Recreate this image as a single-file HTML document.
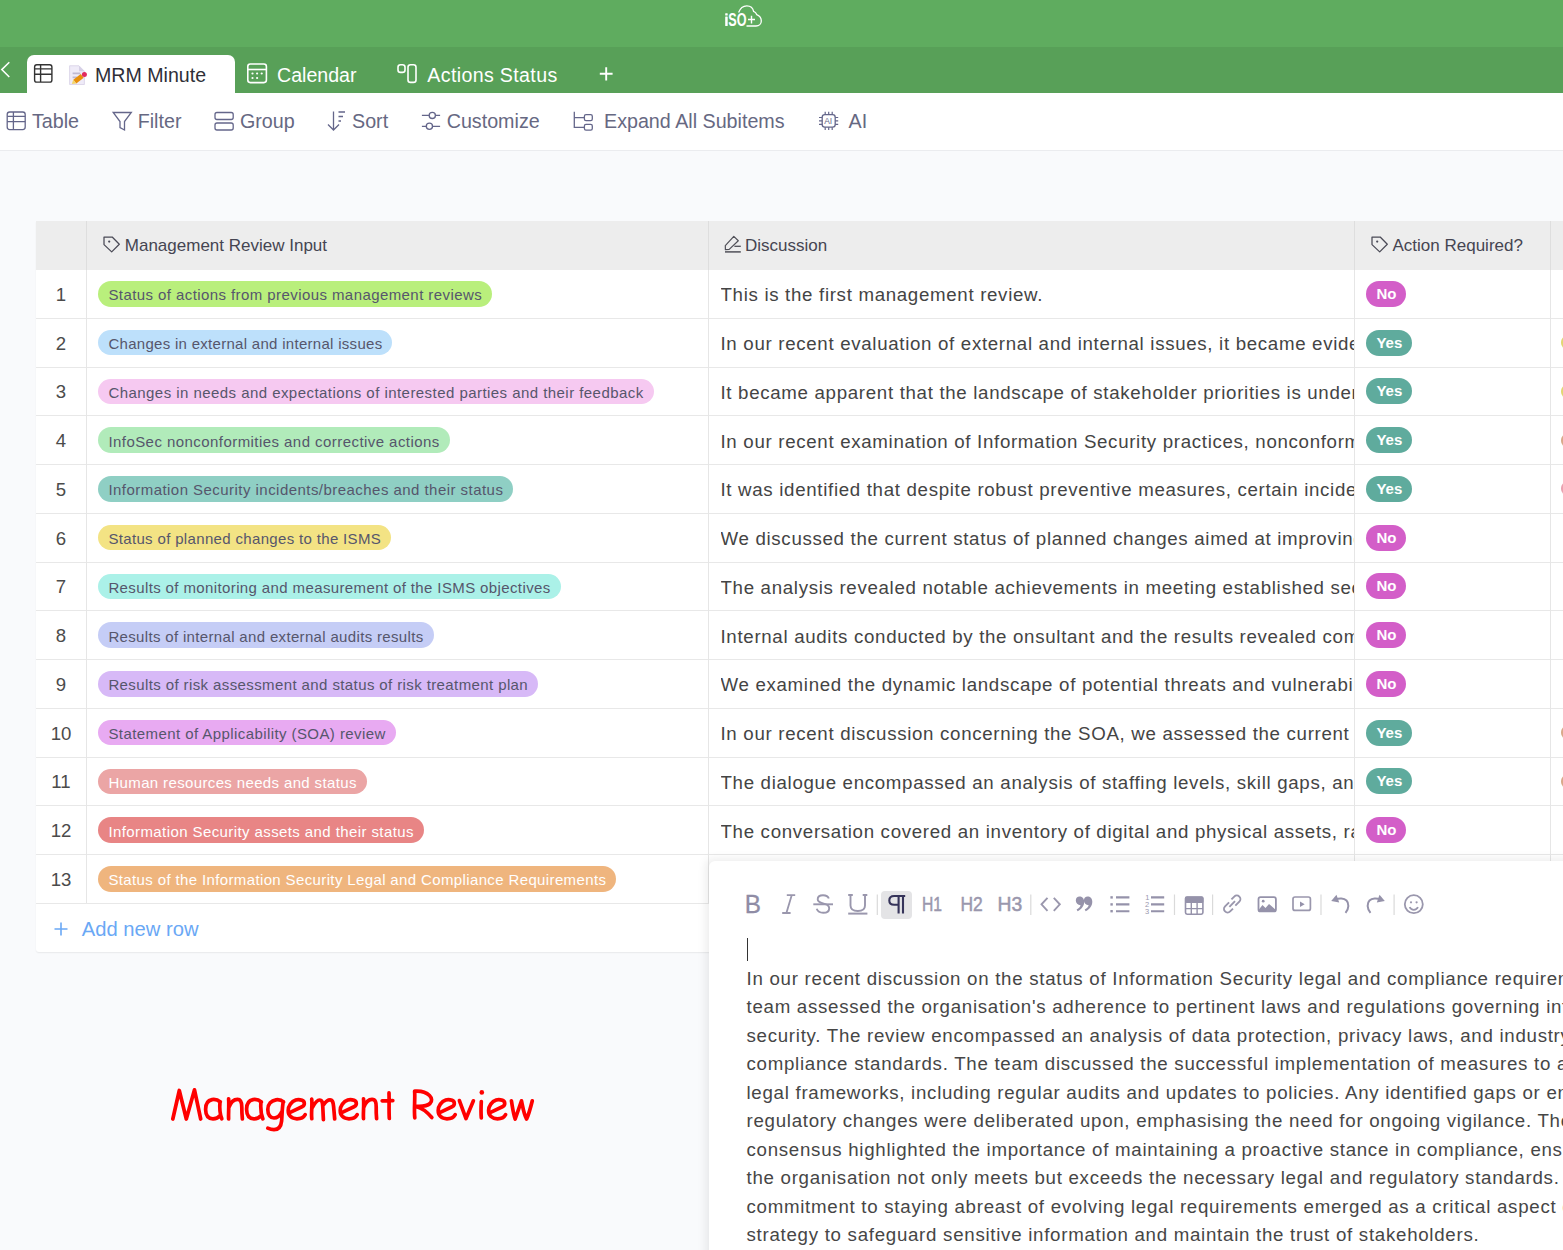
<!DOCTYPE html>
<html><head><meta charset="utf-8">
<style>
*{box-sizing:border-box;margin:0;padding:0}
html,body{width:1563px;height:1250px;overflow:hidden;background:#f9fafc;font-family:"Liberation Sans",sans-serif;position:relative}
.abs{position:absolute}
#top{left:0;top:0;width:1563px;height:46.5px;background:#5fac5f}
#tabs{left:0;top:46.5px;width:1563px;height:46px;background:#58a058}
#tb{left:0;top:92.5px;width:1563px;height:58px;background:#fff;border-bottom:1px solid #ebecef}
.tab{position:absolute;white-space:nowrap;font-size:19.6px;line-height:20px}
.tbi{position:absolute;white-space:nowrap;font-size:19.7px;line-height:20px;color:#666882;top:111px}
svg{position:absolute;overflow:visible}
#table{left:36px;top:221px;width:1600px;height:731px;background:#fff;border-radius:0 0 0 3px;box-shadow:0 1px 1.5px rgba(0,0,0,.07)}
#thead{left:36px;top:221px;width:1600px;height:48.5px;background:#ededed}
.hl{position:absolute;height:1px;background:#e8e8e8;left:36px;width:1600px}
.vl{position:absolute;width:1px;background:#e6e6e6}
.num{position:absolute;left:36px;width:50px;text-align:center;font-size:18.6px;color:#4b4b4b;line-height:20px}
.tag{position:absolute;left:98.4px;height:25.6px;border-radius:13px;padding:0 10px;font-size:15px;line-height:25.6px;color:#56566c;white-space:nowrap}
.tag.w{color:#fff}
.disc{position:absolute;left:720.5px;width:634px;overflow:hidden;white-space:nowrap;font-size:18.7px;letter-spacing:0.68px;line-height:22px;color:#444}
.yn{position:absolute;left:1366.4px;height:25.9px;border-radius:13px;padding:0 10px;font-size:15px;font-weight:bold;line-height:25.9px;color:#fff;white-space:nowrap}
.no{background:#d35ec8}
.yes{background:#5fab9d}
.sl{position:absolute;left:1561.3px;width:6px;height:13px;border-radius:6px 0 0 6px}
.hd{position:absolute;font-size:17px;color:#454552;white-space:nowrap;top:236px;line-height:20px}
#panel{left:708.6px;top:861px;width:900px;height:450px;background:#fff;border-radius:6px;box-shadow:-3px -2px 10px rgba(0,0,0,.08)}
.et{position:absolute;left:746.5px;font-size:18.7px;letter-spacing:0.72px;line-height:28.45px;color:#464646;white-space:nowrap;top:965px}
.ic{stroke:#9592a8;fill:none;stroke-width:1.8}
</style></head><body>

<div id="top" class="abs"></div><div id="tabs" class="abs"></div><div id="tb" class="abs"></div>
<svg style="left:0;top:0" width="1563" height="46">
<g fill="#fff">
<rect x="725.2" y="16.6" width="2.5" height="9.4" rx="0.5"/>
<rect x="725.2" y="13.2" width="2.5" height="2.3" rx="0.5"/>
</g>
<text x="728.3" y="26" font-family="Liberation Sans" font-weight="bold" font-size="18.4" fill="#fff" textLength="18.2" lengthAdjust="spacingAndGlyphs">SO</text>
<path d="M738.6 12.6 C740.3 8 743.5 5.9 746.8 5.9 C750.8 5.9 753 8.3 753.6 11.4 C755.2 12 756.3 13.3 756.8 14.7 C759.5 15.8 761.3 18.3 761.3 21 C761.3 24 759 26 756 26 L746.5 26" stroke="#fff" stroke-width="1.3" fill="none"/>
<path d="M751.5 15.7 V23.5 M748 19.5 H755" stroke="#fff" stroke-width="1.4" fill="none"/>
</svg>
<div class="abs" style="left:26.5px;top:55px;width:208.5px;height:38px;background:#fff;border-radius:7px 7px 0 0"></div>
<svg style="left:0;top:0" width="700" height="95">
<path d="M9.3 62.2 L1.8 69.6 L9.3 77" stroke="#fff" stroke-width="1.5" fill="none"/>
<g stroke="#333" stroke-width="1.4" fill="none">
<rect x="34.6" y="64.7" width="17.3" height="17.4" rx="2.2"/>
<path d="M34.6 68.9 H51.9 M34.6 74.3 H51.9 M40.6 64.7 V82.1"/>
</g>
<g>
<path d="M69.6 65.8 H79 L84.4 71.2 V84.5 H69.6 Z" fill="#efebf8" stroke="#dad4e8" stroke-width="0.9"/>
<path d="M79 65.8 V71.2 H84.4 Z" fill="#d6d0e6"/>
<path d="M72.6 73.4 H80.3 M72.6 77.4 H77" stroke="#bfb9d2" stroke-width="1.7"/>
<path d="M74.8 81.6 L82.2 75.8" stroke="#e8900c" stroke-width="4.8"/>
<path d="M71.8 84 L73.2 79.6 L76.4 83.4 Z" fill="#f3d56a"/>
<circle cx="84.4" cy="74.6" r="2.5" fill="#e22a5f"/>
</g>
<g stroke="#fff" stroke-width="1.6" fill="none">
<rect x="247.8" y="64" width="18.6" height="18.6" rx="2.5"/>
<path d="M247.8 69.5 H266.4"/>
</g>
<g fill="#fff">
<circle cx="252.5" cy="73.5" r="1.1"/><circle cx="257.1" cy="73.5" r="1.1"/><circle cx="261.7" cy="73.5" r="1.1"/>
<circle cx="252.5" cy="78" r="1.1"/><circle cx="257.1" cy="78" r="1.1"/>
</g>
<g stroke="#fff" stroke-width="1.6" fill="none">
<rect x="398" y="64.8" width="7" height="7.6" rx="2.5"/>
<rect x="408" y="64.8" width="8" height="17.6" rx="2.5"/>
<path d="M599.8 73.8 H612.6 M606.2 67.2 V80.4" stroke-width="1.9"/>
</g>
</svg>
<div class="tab" style="left:95px;top:64.5px;color:#2f2f38">MRM Minute</div>
<div class="tab" style="left:277px;top:64.5px;color:#fff">Calendar</div>
<div class="tab" style="left:427.3px;top:64.5px;color:#fff;letter-spacing:0.36px">Actions Status</div>

<div class="tbi" style="left:32px">Table</div>
<div class="tbi" style="left:137.7px">Filter</div>
<div class="tbi" style="left:240px">Group</div>
<div class="tbi" style="left:352px">Sort</div>
<div class="tbi" style="left:446.7px">Customize</div>
<div class="tbi" style="left:604px">Expand All Subitems</div>
<div class="tbi" style="left:848.6px">AI</div>
<svg style="left:0;top:0" width="900" height="150">
<g stroke="#64668a" stroke-width="1.3" fill="none">
<rect x="7.2" y="112" width="18" height="17.6" rx="2.5"/>
<path d="M7.2 116.3 H25.2 M7.2 121.7 H25.2 M13.4 112 V129.6"/>
<path d="M113.2 112.5 H131.3 L124.5 121.5 V130 L120 127.5 V121.5 Z"/>
<rect x="215" y="112.5" width="18.2" height="7" rx="2"/>
<rect x="215" y="123" width="18.2" height="7" rx="2"/>
<path d="M333.5 111.5 V130 M328 124.5 L333.5 130 L339 124.5 M338.5 112 H345 M338.5 116.5 H343 M338.5 121 H341"/>
<circle cx="432.3" cy="115.4" r="3.1"/><circle cx="429.4" cy="126.3" r="3.1"/>
<path d="M421.9 115.4 H429.2 M435.4 115.4 H440.1 M421.9 126.3 H426.3 M432.5 126.3 H440.1"/>
<path d="M574.3 111.8 V127.3 H584.4 M574.3 117.6 H584.4"/>
<rect x="584.4" y="114.7" width="7.9" height="5.9" rx="1.6"/>
<rect x="584.4" y="124.3" width="7.9" height="5.9" rx="1.6"/>
<rect x="822.2" y="114.6" width="13" height="12.6" rx="2.6"/>
<path d="M825.2 111.8 V114.6 M828.7 111.8 V114.6 M832.2 111.8 V114.6 M825.2 127.2 V130 M828.7 127.2 V130 M832.2 127.2 V130 M819 117.5 H822.2 M819 120.9 H822.2 M819 124.3 H822.2 M835.2 117.5 H838.2 M835.2 120.9 H838.2 M835.2 124.3 H838.2" stroke-width="1.2"/>
</g>
<text x="824.2" y="124" font-family="Liberation Sans" font-size="8.6" fill="#64668a" textLength="8" lengthAdjust="spacingAndGlyphs">AI</text>
</svg>
<div id="table" class="abs"></div><div id="thead" class="abs"></div>
<svg style="left:0;top:0" width="1563" height="270">
<g stroke="#4a4a56" stroke-width="1.25" fill="none" stroke-linejoin="round">
<path d="M104 237 H112.2 L119.3 244.3 L111.7 251.9 L104 244.6 Z"/>
<path d="M1372 237 H1380.2 L1387.3 244.3 L1379.7 251.9 L1372 244.6 Z"/>
</g>
<g stroke="#505058" fill="none">
<path d="M733.8 236.4 L738.3 240.7 L729.2 249.4 L725.4 249.6 L725.3 245.6 Z" stroke-width="1.2" stroke-linejoin="round"/>
<path d="M734.4 246.3 H740.8" stroke-width="1.3"/>
<path d="M725 251.9 H740.8" stroke-width="1.5"/>
</g>
<circle cx="109.2" cy="241.6" r="1.1" fill="#4a4a58"/>
<circle cx="1377.2" cy="241.6" r="1.1" fill="#4a4a58"/>
</svg>
<div class="hd" style="left:124.8px">Management Review Input</div>
<div class="hd" style="left:745px">Discussion</div>
<div class="hd" style="left:1392.5px">Action Required?</div>

<div class="vl" style="left:86px;top:221px;height:48.5px;background:#dedede"></div>
<div class="vl" style="left:708px;top:221px;height:48.5px;background:#dedede"></div>
<div class="vl" style="left:1354px;top:221px;height:48.5px;background:#dedede"></div>
<div class="vl" style="left:1550px;top:221px;height:48.5px;background:#dedede"></div>
<div class="hl" style="top:318px"></div>
<div class="num" style="top:284.88px">1</div>
<div class="tag" style="top:281.07px;background:#b9ef7c;letter-spacing:0.421px"><span style="position:relative;top:1.3px">Status of actions from previous management reviews</span></div>
<div class="disc" style="top:284.27px">This is the first management review.</div>
<div class="yn no" style="top:280.93px">No</div>
<div class="hl" style="top:367px"></div>
<div class="num" style="top:333.62px">2</div>
<div class="tag" style="top:329.82px;background:#bde0fb;letter-spacing:0.293px"><span style="position:relative;top:1.3px">Changes in external and internal issues</span></div>
<div class="disc" style="top:333.02px">In our recent evaluation of external and internal issues, it became evident that</div>
<div class="yn yes" style="top:329.68px">Yes</div>
<div class="sl" style="top:336.12px;background:#e2d774"></div>
<div class="hl" style="top:415px"></div>
<div class="num" style="top:382.38px">3</div>
<div class="tag" style="top:378.57px;background:#f6c9f1;letter-spacing:0.450px"><span style="position:relative;top:1.3px">Changes in needs and expectations of interested parties and their feedback</span></div>
<div class="disc" style="top:381.77px">It became apparent that the landscape of stakeholder priorities is undergoing</div>
<div class="yn yes" style="top:378.43px">Yes</div>
<div class="sl" style="top:384.88px;background:#e2d774"></div>
<div class="hl" style="top:464px"></div>
<div class="num" style="top:431.12px">4</div>
<div class="tag" style="top:427.32px;background:#b1ebba;letter-spacing:0.442px"><span style="position:relative;top:1.3px">InfoSec nonconformities and corrective actions</span></div>
<div class="disc" style="top:430.52px">In our recent examination of Information Security practices, nonconformities</div>
<div class="yn yes" style="top:427.18px">Yes</div>
<div class="sl" style="top:433.62px;background:#d9a98a"></div>
<div class="hl" style="top:513px"></div>
<div class="num" style="top:479.88px">5</div>
<div class="tag" style="top:476.07px;background:#8fcfc4;letter-spacing:0.457px"><span style="position:relative;top:1.3px">Information Security incidents/breaches and their status</span></div>
<div class="disc" style="top:479.27px">It was identified that despite robust preventive measures, certain incidents</div>
<div class="yn yes" style="top:475.93px">Yes</div>
<div class="sl" style="top:482.38px;background:#e9a2b0"></div>
<div class="hl" style="top:562px"></div>
<div class="num" style="top:528.62px">6</div>
<div class="tag" style="top:524.83px;background:#f3e384;letter-spacing:0.340px"><span style="position:relative;top:1.3px">Status of planned changes to the ISMS</span></div>
<div class="disc" style="top:528.02px">We discussed the current status of planned changes aimed at improving the</div>
<div class="yn no" style="top:524.67px">No</div>
<div class="hl" style="top:610px"></div>
<div class="num" style="top:577.38px">7</div>
<div class="tag" style="top:573.58px;background:#abf1e8;letter-spacing:0.381px"><span style="position:relative;top:1.3px">Results of monitoring and measurement of the ISMS objectives</span></div>
<div class="disc" style="top:576.77px">The analysis revealed notable achievements in meeting established security</div>
<div class="yn no" style="top:573.42px">No</div>
<div class="hl" style="top:659px"></div>
<div class="num" style="top:626.12px">8</div>
<div class="tag" style="top:622.33px;background:#c5cdf6;letter-spacing:0.336px"><span style="position:relative;top:1.3px">Results of internal and external audits results</span></div>
<div class="disc" style="top:625.52px">Internal audits conducted by the onsultant and the results revealed commendable</div>
<div class="yn no" style="top:622.17px">No</div>
<div class="hl" style="top:708px"></div>
<div class="num" style="top:674.88px">9</div>
<div class="tag" style="top:671.08px;background:#d7b9f7;letter-spacing:0.395px"><span style="position:relative;top:1.3px">Results of risk assessment and status of risk treatment plan</span></div>
<div class="disc" style="top:674.27px">We examined the dynamic landscape of potential threats and vulnerabilities</div>
<div class="yn no" style="top:670.92px">No</div>
<div class="hl" style="top:757px"></div>
<div class="num" style="top:723.62px">10</div>
<div class="tag" style="top:719.83px;background:#e8aaf2;letter-spacing:0.421px"><span style="position:relative;top:1.3px">Statement of Applicability (SOA) review</span></div>
<div class="disc" style="top:723.02px">In our recent discussion concerning the SOA, we assessed the current state</div>
<div class="yn yes" style="top:719.67px">Yes</div>
<div class="sl" style="top:726.12px;background:#d9a98a"></div>
<div class="hl" style="top:805px"></div>
<div class="num" style="top:772.38px">11</div>
<div class="tag w" style="top:768.58px;background:#eba5a5;letter-spacing:0.362px"><span style="position:relative;top:1.3px">Human resources needs and status</span></div>
<div class="disc" style="top:771.77px">The dialogue encompassed an analysis of staffing levels, skill gaps, and</div>
<div class="yn yes" style="top:768.42px">Yes</div>
<div class="sl" style="top:774.88px;background:#d9a98a"></div>
<div class="hl" style="top:854px"></div>
<div class="num" style="top:821.12px">12</div>
<div class="tag w" style="top:817.33px;background:#e88585;letter-spacing:0.406px"><span style="position:relative;top:1.3px">Information Security assets and their status</span></div>
<div class="disc" style="top:820.52px">The conversation covered an inventory of digital and physical assets, ranging</div>
<div class="yn no" style="top:817.17px">No</div>
<div class="hl" style="top:903px"></div>
<div class="num" style="top:869.88px">13</div>
<div class="tag w" style="top:866.08px;background:#efb57e;letter-spacing:0.370px"><span style="position:relative;top:1.3px">Status of the Information Security Legal and Compliance Requirements</span></div>
<div class="vl" style="left:86px;top:269.5px;height:633.75px"></div>
<div class="vl" style="left:708px;top:269.5px;height:633.75px"></div>
<div class="vl" style="left:1354px;top:269.5px;height:633.75px"></div>
<div class="vl" style="left:1550px;top:269.5px;height:633.75px"></div>
<svg style="left:0;top:900" width="300" height="60">
<path d="M54.5 29 H67.5 M61 22.5 V35.5" stroke="#6aa8f5" stroke-width="1.6" fill="none"/>
</svg>
<div class="abs" style="left:81.8px;top:918px;font-size:20.2px;line-height:22px;color:#6aa8f5">Add new row</div>

<svg style="left:0;top:0" width="600" height="1250">
<g stroke="#ff0000" stroke-width="3.7" fill="none" stroke-linecap="round" stroke-linejoin="round">
<path d="M172.8 1119 L179.3 1090.5 L186.3 1119 L194.5 1089.8 L200.7 1119"/>
<path d="M220.3 1102 C217.5 1099.5 214 1099.3 212 1099.6 C207.5 1100.5 205.5 1104.5 205.6 1109.5 C205.7 1115.5 208.5 1118.8 213 1118.8 C216 1118.8 218.5 1117.5 220.2 1115.5 M220 1101.5 C219.5 1107 219.5 1113 221.8 1118.8"/>
<path d="M228.6 1098.8 C229.2 1105 228.3 1113 228.6 1119 M228.9 1107.5 C231 1101.5 234.5 1099.3 237.5 1099.3 C241 1099.3 241.8 1102.5 241.8 1107 C241.8 1112 242 1115.5 242.4 1119"/>
<path d="M261.3 1102 C258.5 1099.5 255 1099.3 253 1099.6 C248.5 1100.5 246.5 1104.5 246.6 1109.5 C246.7 1115.5 249.5 1118.8 254 1118.8 C257 1118.8 259.5 1117.5 261.2 1115.5 M261 1101.5 C260.5 1107 260.5 1113 262.8 1118.8"/>
<path d="M283.6 1102 C281.5 1100 278.5 1099.5 276 1099.8 C271.5 1100.5 267.8 1104 267.8 1109.5 C267.8 1115 270.5 1118 274 1118 C277.5 1118 280 1115.5 281.6 1112 M283.3 1101.5 C282 1108 282.2 1115 281.6 1121 C281 1127 278 1129.7 274 1129.7 C271.5 1129.7 269.5 1129 267.8 1128.2"/>
<path d="M290.2 1112.3 L302.5 1106.5 C305 1105 305 1101.5 302 1100.3 C300 1099.5 297.5 1099.4 295.8 1100 C291.5 1101.5 288.2 1106 288.2 1110.5 C288.2 1115.5 291.5 1118.8 297 1118.8 C300.5 1118.8 303.8 1117.2 305.2 1114.6"/>
<path d="M311.7 1099.2 C312.5 1105 311 1113 311.8 1118.7 M312.3 1107.6 C314.5 1103.5 317.5 1100 319.5 1100 C322.3 1100 322.6 1103 322.8 1107 C323 1112 323.2 1115.5 323.4 1119.6 M323.6 1104.6 C325.5 1101.8 328 1099.8 330 1099.8 C332.8 1099.8 333.2 1102.5 333.6 1106.5 L334.7 1119"/>
<path d="M342.2 1112.3 L354.5 1106.5 C357 1105 357 1101.5 354 1100.3 C352 1099.5 349.5 1099.4 347.8 1100 C343.5 1101.5 340.2 1106 340.2 1110.5 C340.2 1115.5 343.5 1118.8 349 1118.8 C352.5 1118.8 355.8 1117.2 357.2 1114.6"/>
<path d="M363.5 1098.8 C364.2 1105 363 1113 363.5 1118.6 M363.9 1107 C366 1101.5 369.5 1099.3 372 1099.3 C375.5 1099.3 376.3 1102.5 376.2 1107 C376.1 1112 376.3 1115.5 376.6 1118.6"/>
<path d="M389 1092.9 C389.3 1101 388.8 1110 389.3 1118.5 M382.2 1100.8 C386 1101.2 389 1100.6 392.8 1100.6"/>
<path d="M414.6 1091.3 C415.3 1098 413.8 1110 414.8 1117.8 M414.8 1091.2 C421 1090.8 426 1092 429.5 1095.5 C432 1098 432.3 1101.5 430 1103.5 C427 1106.2 421 1106.5 416 1106.2 M416.5 1106.8 C421.5 1107.8 427 1112 431.8 1117.5"/>
<path d="M440.2 1112.3 L452.5 1106.5 C455 1105 455 1101.5 452 1100.3 C450 1099.5 447.5 1099.4 445.8 1100 C441.5 1101.5 438.2 1106 438.2 1110.5 C438.2 1115.5 441.5 1118.8 447 1118.8 C450.5 1118.8 453.8 1117.2 455.2 1114.6"/>
<path d="M459.4 1100.6 L466 1118.6 L473.4 1100.8"/>
<path d="M481.3 1101.5 C481 1107 480.9 1113 481.3 1117.8"/>
<path d="M490.6 1112.3 L502.9 1106.5 C505.4 1105 505.4 1101.5 502.4 1100.3 C500.4 1099.5 497.9 1099.4 496.2 1100 C491.9 1101.5 488.6 1106 488.6 1110.5 C488.6 1115.5 491.9 1118.8 497.4 1118.8 C500.9 1118.8 504.2 1117.2 505.6 1114.6"/>
<path d="M511.4 1100.8 C512.5 1107 513.3 1114 515.2 1119 L521.5 1100.8 C522.8 1107 523.8 1114 526.6 1119 C529 1114 531 1106 532.3 1100.8"/>
</g>
<circle cx="481.8" cy="1092.4" r="2.3" fill="#ff0000"/>
</svg>

<div id="panel" class="abs"></div>
<div class="abs" style="left:880.9px;top:890.8px;width:31.3px;height:28px;background:#e4e4e6;border-radius:4px"></div>
<svg style="left:0;top:0" width="1563" height="930">
<g fill="#8f8ca5">
<text x="744.8" y="913.4" font-family="Liberation Sans" font-size="26.5" textLength="16.2" lengthAdjust="spacingAndGlyphs" stroke="#8f8ca5" stroke-width="0.35">B</text>
</g>
<g fill="#9a97ad">
</g><g stroke="#9a97ad" stroke-width="1.8" fill="none"><path d="M786.8 895.2 H795.2 M782.2 913 H790.6 M791.7 895.2 L786.4 913"/>
</g>
<g stroke="#9a97ad" stroke-width="1.9" fill="none">
<path d="M828.8 898.5 C828 896 826 895.3 823 895.3 C819.5 895.3 817.7 897 817.7 899.3 C817.7 901.5 819.5 902.6 823 903.4 C827 904.3 829.2 905.6 829.2 908.2 C829.2 911 826.8 912.8 823.2 912.8 C819.8 912.8 817.6 911.3 816.7 908.8"/>
<path d="M813.3 904.3 H833"/>
<path d="M850.5 895 V905.5 C850.5 909.2 853.2 911 857.8 911 C862.4 911 865 909.2 865 905.5 V895 M848.2 895 H852.8 M862.7 895 H867.3"/>
<path d="M848.2 913.6 H867.4" stroke-width="2"/>
</g>
<g stroke="#36345a" stroke-width="2.1" fill="none"><path d="M905.2 896 H894.2 C890.8 896 889.3 898.2 889.3 900.5 C889.3 902.8 890.8 904.8 894.2 904.8 H898.6 M898.6 896 V913.4 M903 896 V913.4"/></g>
<g fill="#9a97ad" font-family="Liberation Sans" font-size="19.8" stroke="#9a97ad" stroke-width="0.5">
<text x="922" y="911.3" textLength="20" lengthAdjust="spacingAndGlyphs">H1</text>
<text x="960.5" y="911.3" textLength="22.3" lengthAdjust="spacingAndGlyphs">H2</text>
<text x="997.5" y="911.3" textLength="24.7" lengthAdjust="spacingAndGlyphs">H3</text>
</g>
<g stroke="#dadada" stroke-width="1.2">
<path d="M877.3 894.6 V915 M1030.8 894.6 V915 M1174.5 894.6 V915 M1212.6 894.6 V915 M1321 894.6 V915 M1394.1 894.6 V915"/>
</g>
<g stroke="#9a97ad" stroke-width="1.9" fill="none">
<path d="M1047.5 897.8 L1041.5 904.3 L1047.5 910.8 M1053.8 897.8 L1059.8 904.3 L1053.8 910.8"/>
</g>
<g fill="#9592aa">
<path d="M1079.5 896.6 C1082 896.6 1084.2 898.5 1084.2 901.8 C1084.2 905.8 1081.5 909.5 1077.6 911.2 L1076.6 909.6 C1079 908.2 1080.3 906.6 1080.6 905.2 C1077.8 905 1075.8 903.2 1075.8 900.5 C1075.8 898.2 1077.4 896.6 1079.5 896.6 Z"/>
<path d="M1087.6 896.6 C1090.1 896.6 1092.3 898.5 1092.3 901.8 C1092.3 905.8 1089.6 909.5 1085.7 911.2 L1084.7 909.6 C1087.1 908.2 1088.4 906.6 1088.7 905.2 C1085.9 905 1083.9 903.2 1083.9 900.5 C1083.9 898.2 1085.5 896.6 1087.6 896.6 Z"/>
</g>
<g stroke="#9592aa" stroke-width="2.1" fill="none">
<path d="M1116 897.4 H1129.4 M1116 904.4 H1129.4 M1116 911.2 H1129.4 M1151 897.4 H1164.2 M1151 904.4 H1164.2 M1151 911.2 H1164.2"/>
</g>
<g fill="#9592aa">
<rect x="1110.4" y="896.2" width="2.4" height="2.4"/><rect x="1110.4" y="903.2" width="2.4" height="2.4"/><rect x="1110.4" y="910" width="2.4" height="2.4"/>
</g>
<g fill="#9a97ad" font-family="Liberation Sans" font-size="7.5">
<text x="1145.2" y="900">1</text><text x="1145" y="907.2">2</text><text x="1145" y="914">3</text>
</g>
<g>
<rect x="1185.5" y="897" width="17.4" height="17.2" rx="1.6" fill="none" stroke="#9592aa" stroke-width="1.6"/>
<rect x="1185" y="896.4" width="18.4" height="6.6" rx="1.6" fill="#9592aa"/>
<path d="M1185.5 908.6 H1202.9 M1191.3 903 V914.2 M1197.1 903 V914.2" stroke="#9592aa" stroke-width="1.4"/>
</g>
<g transform="rotate(-45 1232.2 904)" stroke="#9a97ad" stroke-width="1.9" fill="none">
<path d="M1231.2 900.6 H1225.5 C1223.5 900.6 1221.9 902.2 1221.9 904.2 C1221.9 906.2 1223.5 907.8 1225.5 907.8 H1229.5"/>
<path d="M1233.2 907.4 H1238.9 C1240.9 907.4 1242.5 905.8 1242.5 903.8 C1242.5 901.8 1240.9 900.2 1238.9 900.2 H1234.9"/>
<path d="M1228.2 904 H1236.2"/>
</g>
<g>
<rect x="1258.5" y="897.2" width="17.4" height="14.2" rx="2" fill="none" stroke="#9592aa" stroke-width="1.8"/>
<path d="M1258.5 910 L1262.5 905 L1265.5 908 L1269 904 L1275.9 910 V911.5 H1258.5 Z" fill="#9592aa"/>
<circle cx="1263.2" cy="901.2" r="1.4" fill="#9592aa"/>
</g>
<g>
<rect x="1293" y="897" width="17.4" height="13.4" rx="2" fill="none" stroke="#9a97ad" stroke-width="1.7"/>
<path d="M1300 901.5 L1304.7 904.3 L1300 907 Z" fill="#9592aa"/>
</g>
<g stroke="#9592aa" stroke-width="2" fill="none">
<path d="M1335.5 899.5 C1339 898 1344 898 1346.5 900.5 C1349 903 1349.3 908.5 1345.5 912.8"/>
<path d="M1380.5 899.5 C1377 898 1372 898 1369.5 900.5 C1367 903 1366.7 908.5 1370.5 912.8"/>
</g>
<g fill="#9592aa">
<path d="M1336.5 894.8 L1331.2 901 L1339.2 902.4 Z"/>
<path d="M1379.5 894.8 L1384.8 901 L1376.8 902.4 Z"/>
</g>
<g stroke="#9a97ad" stroke-width="1.8" fill="none">
<circle cx="1413.8" cy="904.2" r="9"/>
<path d="M1409.6 907.2 C1410.6 909.2 1412 909.8 1413.8 909.8 C1415.6 909.8 1417 909.2 1418 907.2"/>
</g>
<g fill="#9a97ad"><circle cx="1411" cy="902.3" r="1.1"/><circle cx="1416.6" cy="902.3" r="1.1"/></g>
</svg>

<div class="abs" style="left:746.5px;top:938px;width:1.6px;height:23px;background:#333"></div>
<div class="et" style="top:965.00px">In our recent discussion on the status of Information Security legal and compliance requirements, the</div>
<div class="et" style="top:993.45px">team assessed the organisation's adherence to pertinent laws and regulations governing information</div>
<div class="et" style="top:1021.90px">security. The review encompassed an analysis of data protection, privacy laws, and industry-specific</div>
<div class="et" style="top:1050.35px">compliance standards. The team discussed the successful implementation of measures to align with</div>
<div class="et" style="top:1078.80px">legal frameworks, including regular audits and updates to policies. Any identified gaps or emerging</div>
<div class="et" style="top:1107.25px">regulatory changes were deliberated upon, emphasising the need for ongoing vigilance. The team's</div>
<div class="et" style="top:1135.70px">consensus highlighted the importance of maintaining a proactive stance in compliance, ensuring that</div>
<div class="et" style="top:1164.15px">the organisation not only meets but exceeds the necessary legal and regulatory standards. This</div>
<div class="et" style="top:1192.60px">commitment to staying abreast of evolving legal requirements emerged as a critical aspect of the</div>
<div class="et" style="top:1221.05px">strategy to safeguard sensitive information and maintain the trust of stakeholders.</div>
</body></html>
